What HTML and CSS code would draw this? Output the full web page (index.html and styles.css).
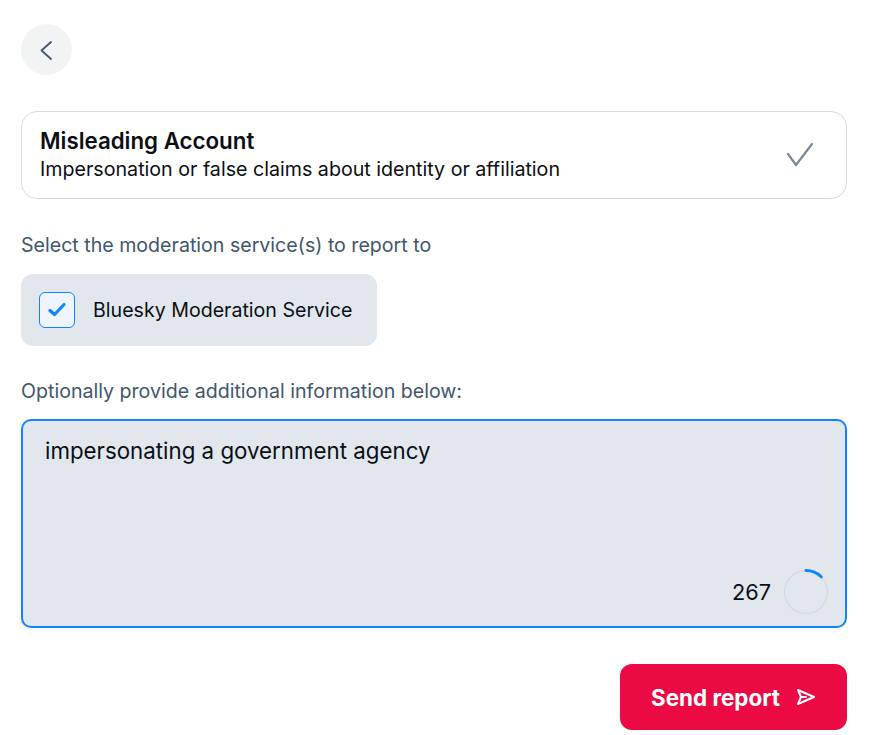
FILE: index.html
```html
<!DOCTYPE html>
<html>
<head>
<meta charset="utf-8">
<link rel="stylesheet" href="styles.css">
</head>
<body>
<div class="page">
  <button class="back" aria-label="Back">
    <svg width="24" height="24" viewBox="0 0 24 24" fill="none" stroke="#42576c" stroke-width="1.8" stroke-linecap="round" stroke-linejoin="round"><path d="M16 4 L6.5 12.5 L16 21"/></svg>
  </button>

  <div class="reason">
    <div class="reason-text">
      <div class="reason-title">Misleading Account</div>
      <div class="reason-desc">Impersonation or false claims about identity or affiliation</div>
    </div>
    <svg class="reason-check" width="28" height="26" viewBox="0 0 28 26" fill="none" stroke="#7c8798" stroke-width="2.2" stroke-linecap="round" stroke-linejoin="round"><path d="M2 12 L10 23 L26 2"/></svg>
  </div>

  <div class="label label-services">Select the moderation service(s) to report to</div>

  <div class="service">
    <span class="checkbox">
      <svg width="18" height="18" viewBox="0 0 18 18" fill="none" stroke="#1083fe" stroke-width="3.2" stroke-linecap="round" stroke-linejoin="round"><path d="M2 9.5 L6.5 13.5 L16 3.5"/></svg>
    </span>
    <span class="service-name">Bluesky Moderation Service</span>
  </div>

  <div class="label label-details">Optionally provide additional information below:</div>

  <div class="details">
    <div class="details-text">impersonating a government agency</div>
    <div class="counter">
      <span class="count">267</span>
      <svg width="46" height="46" viewBox="0 0 46 46" class="ring">
        <circle cx="23" cy="23" r="21.5" fill="none" stroke="#d4dbe3" stroke-width="1.5"/>
        <path d="M23 1.5 A21.5 21.5 0 0 1 38.2 7.8" fill="none" stroke="#1083fe" stroke-width="3" stroke-linecap="round"/>
      </svg>
    </div>
  </div>

  <div class="actions">
    <button class="send">
      <span>Send report</span>
      <svg width="20" height="18" viewBox="0 0 20 18" fill="none" stroke="#fff" stroke-width="2" stroke-linejoin="round" stroke-linecap="round"><path d="M2 2 L18 9 L2 16 L5 9 Z"/><path d="M5 9 H10"/></svg>
    </button>
  </div>
</div>
</body>
</html>
```

FILE: styles.css
```css
html, body {
  margin: 0;
  padding: 0;
  background: #ffffff;
}
body {
  font-family: Inter, "Noto Sans", "Liberation Sans", sans-serif;
  color: #0b0f14;
}
.page {
  padding: 24px 23px 0 21px;
  display: flex;
  flex-direction: column;
}
.back {
  width: 51px;
  height: 51px;
  border-radius: 50%;
  border: none;
  background: #f1f3f5;
  display: flex;
  align-items: center;
  justify-content: center;
  padding: 0;
  margin-bottom: 36px;
}
.reason {
  border: 1px solid #d4dbe2;
  border-radius: 16px;
  height: 88px;
  box-sizing: border-box;
  padding: 0 32px 0 18px;
  display: flex;
  align-items: center;
  justify-content: space-between;
}
.reason-title {
  font-size: 22.3px;
  font-weight: 600;
  line-height: 28px;
}
.reason-desc {
  font-size: 19.65px;
  line-height: 28px;
  color: #0b0f14;
}
.label {
  font-size: 19.6px;
  color: #42576c;
  line-height: 26px;
}
.label-services {
  margin-top: 33px;
}
.service {
  margin-top: 16px;
  align-self: flex-start;
  width: 356px;
  height: 72px;
  box-sizing: border-box;
  background: #e2e7ee;
  border-radius: 12px;
  display: flex;
  align-items: center;
  padding-left: 18px;
  gap: 18px;
}
.checkbox {
  width: 36px;
  height: 36px;
  box-sizing: border-box;
  border: 1px solid #1083fe;
  border-radius: 6px;
  background: #eef5ff;
  display: flex;
  align-items: center;
  justify-content: center;
}
.service-name {
  font-size: 19.6px;
  color: #0b0f14;
}
.label-details {
  margin-top: 32px;
}
.details {
  margin-top: 15px;
  height: 209px;
  box-sizing: border-box;
  border: 2px solid #1083fe;
  border-radius: 10px;
  background: #e2e7ee;
  padding: 15px 16px 11px 22px;
  display: flex;
  flex-direction: column;
  justify-content: space-between;
}
.details-text {
  font-size: 22.3px;
  line-height: 30px;
  color: #0b0f14;
}
.counter {
  display: flex;
  align-items: center;
  justify-content: flex-end;
  gap: 12px;
}
.count {
  font-size: 21.7px;
  color: #0b0f14;
}
.actions {
  margin-top: 36px;
  display: flex;
  justify-content: flex-end;
}
.send {
  width: 227px;
  height: 66px;
  border: none;
  border-radius: 12px;
  background: #ec0a44;
  color: #ffffff;
  font-family: inherit;
  font-size: 22.4px;
  font-weight: 700;
  display: flex;
  align-items: center;
  justify-content: center;
  gap: 16px;
  padding: 0;
}
```
